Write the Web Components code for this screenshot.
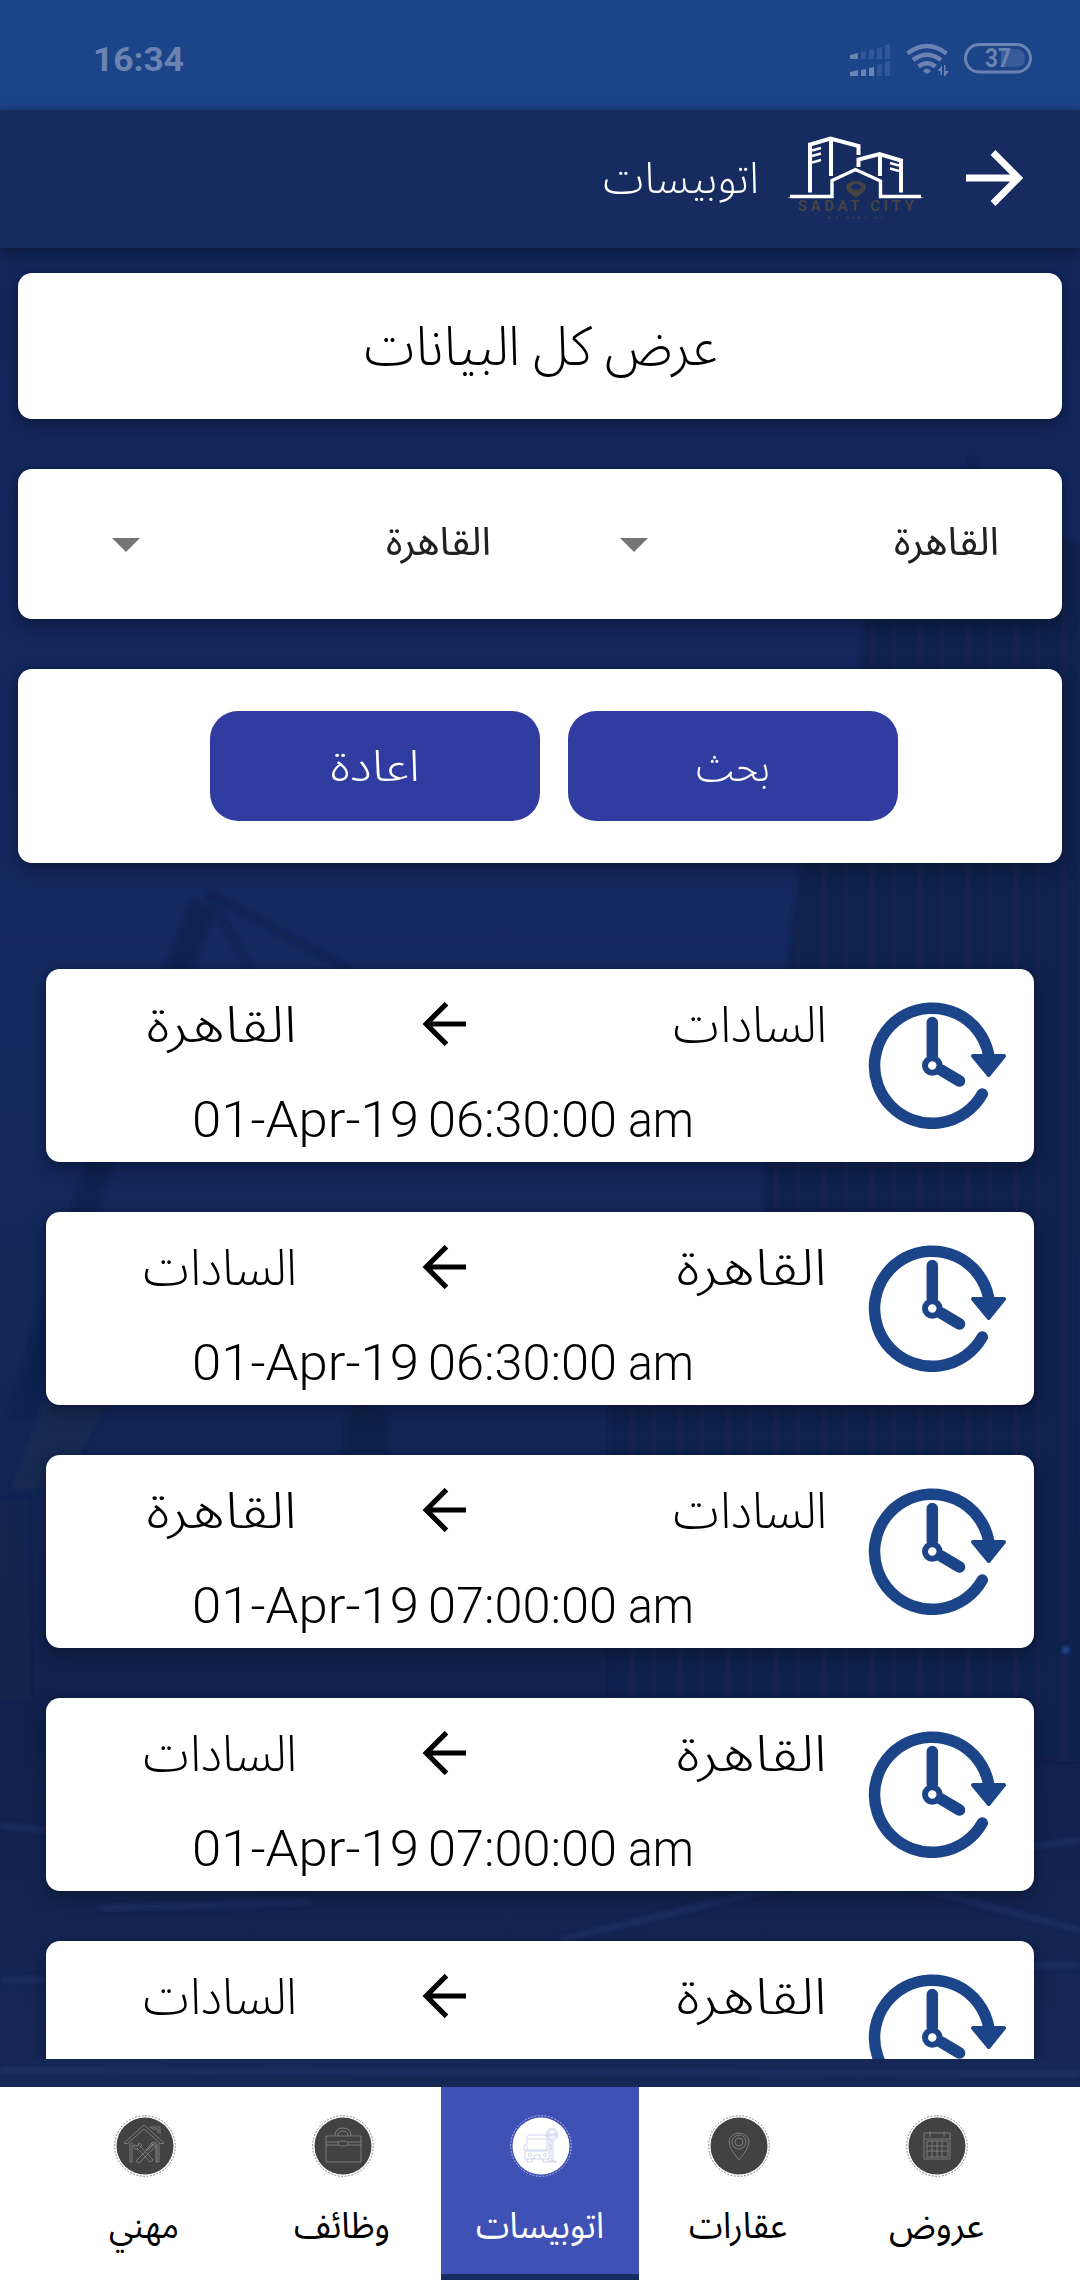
<!DOCTYPE html>
<html lang="ar"><head><meta charset="utf-8"><title>اتوبيسات</title>
<style>html,body{margin:0;padding:0;width:1080px;height:2280px;overflow:hidden;background:#12275b}</style></head>
<body><bus-app></bus-app>
<script>
const define=(name,build)=>customElements.define(name,class extends HTMLElement{
  connectedCallback(){if(!this.shadowRoot)this.attachShadow({mode:'open'}).innerHTML=build(this)}});
const attr=(e,n,d='')=>e.getAttribute(n)??d;

/* One line of text fitted to a width; "base" is the baseline inside the box. */
define('line-text',e=>{const w=+attr(e,'w'),h=attr(e,'h',40),b=attr(e,'base',32),s=attr(e,'size',40),bleed=+attr(e,'bleed',2);
return `<style>:host{display:block;flex:none;width:${w}px;height:${h}px}svg{display:block;overflow:visible;direction:ltr}
text{font:${attr(e,'weight','300')} ${s}px ${attr(e,'font',"Roboto,'Noto Sans Arabic','DejaVu Sans',sans-serif")};fill:currentColor}</style>
<svg width="${w}" height="${h}"><text x="${-bleed}" y="${b}" textLength="${w+2*bleed}" lengthAdjust="spacingAndGlyphs">${attr(e,'text')}</text></svg>`});

define('status-bar',()=>`<style>:host{display:flex;height:110px;background:#1c4488;color:#6a83b1;align-items:flex-start;padding:0 48px 0 95px;box-sizing:border-box}
line-text{margin-top:40px}.g{flex:1}svg{display:block;margin-top:42px}</style>
<line-text text="16:34" w="87" h="40" base="31" size="34" weight="700"></line-text><div class="g"></div>
<svg width="182" height="34" viewBox="850 42 182 34"><g fill="currentColor">
<path d="M850 55l8-2v6h-8zM850 72l8-2v6h-8zM861 70l5-1v7h-5zM869 68l5-1v9h-5z"/>
<path opacity=".3" d="M861 52l5-1v8h-5zM869 50l5-1v10h-5zM877 48l5-1v12h-5zM885 45l5-1v15h-5zM877 65l5-1v12h-5zM885 62l5-1v15h-5z"/></g>
<g fill="none" stroke="currentColor" stroke-width="4.6"><path d="M907.500 53.500Q927 38.500 946.500 53.500M913 60Q927 49.500 941 60M918.500 66.500Q927 60 935.500 66.500"/></g>
<path fill="currentColor" d="M923 71q4-5 8 0l-4 3zM937.500 71l4.500-6v10h-1.500v-4zM944 65h1.500v6h3.500l-5 6z"/>
<path fill="#3a5b99" d="M1001 49h14q10 0 10 9t-10 9h-14z"/>
<rect x="965.500" y="44.500" width="65" height="27.500" rx="13.750" fill="none" stroke="currentColor" stroke-width="3"/>
<text x="985" y="67" textLength="26" lengthAdjust="spacingAndGlyphs" font-family="Roboto" font-weight="700" font-size="25" fill="currentColor">37</text></svg>`);

define('city-logo',()=>`<style>:host{display:block;width:138px;height:84px}svg{display:block;overflow:visible}</style>
<svg width="138" height="84" viewBox="787 136 138 84"><g fill="none" stroke="#fff" stroke-width="4">
<path d="M810 192.500V144.500L830.500 138.500 858.500 146V155M831 139V176M858.500 167V159.500L879.500 154 901 160.500V192.500M880 155V176"/>
<path d="M790 196.500H832V180.500L855.500 169.500 880.500 181V196.500H921" stroke-width="3.400"/>
<path stroke-width="2.500" d="M812 150.500l9-2.500M812 156l9-2.500M812 162.500l9-2.500M899 165.500l-9-2.500M899 171l-9-2.500"/></g>
<path fill="#fff" d="M787 198h12v-3zM924 198h-12v-3z"/>
<path fill="#444" fill-rule="evenodd" d="M856 198q-10-7-10-11a10 6 0 0 1 20 0q0 4-10 11zM856 184a5 3 0 1 0 .1 0z"/>
<text x="798" y="211" textLength="116" font-family="Roboto" font-weight="700" font-size="15" fill="#444">SADAT CITY</text>
<path stroke="#3a3f52" stroke-width="1.300" stroke-dasharray="3 5 2 8 3 3 2 3" d="M828 217.500h56"/></svg>`);

define('top-bar',()=>`<style>:host{display:flex;height:138px;background:#162b60;box-shadow:0 4px 12px #0a1736;position:relative;color:#fff;justify-content:flex-end;box-sizing:border-box;padding-right:57px}
line-text{margin:41px 31px 0 0}city-logo{margin:26px 41px 0 0}svg{display:block;margin-top:40px}</style>
<line-text text="اتوبيسات" w="150" h="60" base="42" size="43" bleed="3" weight="330"></line-text><city-logo></city-logo>
<svg width="57" height="56" viewBox="0 0 57 56"><path d="M0 28H50M27 2.500L52.500 28 27 53.500" fill="none" stroke="#fff" stroke-width="6.800"/></svg>`);

define('white-card',()=>`<style>:host{display:flex;box-sizing:border-box;background:#fff;border-radius:14px;box-shadow:0 7px 16px rgba(8,16,40,.5),0 0 5px rgba(8,16,40,.3)}</style><slot></slot>`);
define('pick-list',()=>`<style>:host{display:flex;flex:none;width:508px;padding:13px 0 0 94px;box-sizing:border-box;color:#212121;align-items:flex-start;gap:248px}svg{display:block;margin-top:56px}line-text{margin-top:36px}</style>
<svg width="28" height="14"><path d="M0 0H28L14 14z" fill="#757575"/></svg><line-text text="القاهرة" w="101" h="50" base="37" size="39" weight="400"></line-text>`);
define('pill-button',e=>`<style>:host{display:flex;width:330px;height:110px;border-radius:28px;background:#303c9f;color:#fff;justify-content:center;box-sizing:border-box}line-text{margin-top:30px}</style>
<line-text text="${attr(e,'text')}" w="${attr(e,'w')}" h="50" base="40" size="43"></line-text>`);

define('clock-icon',()=>`<style>:host{display:block;width:138px;height:128px}svg{display:block}</style>
<svg width="138" height="128" viewBox="868 1001 138 128"><g fill="none" stroke="#1c4488" stroke-width="11.500" stroke-linecap="round">
<path d="M982.300 1094A57.600 57.600 0 1 1 988.500 1054"/><path d="M932.300 1055V1022.500M941 1070L959.500 1081"/><circle cx="932.300" cy="1065.500" r="7.300" stroke-width="6"/></g>
<path d="M973 1056H1004L988.700 1075z" fill="#1c4488" stroke="#1c4488" stroke-width="4" stroke-linejoin="round"/></svg>`);

/* Departure stamp: date, time and meridiem sit on fixed columns. */
define('trip-stamp',e=>{const [d,t,m]=attr(e,'value').split(' ');return `<style>:host{display:flex;height:60px;align-items:flex-start}.t{margin-left:13px}.m{margin-left:15px}</style>
<line-text text="${d}" w="223" h="60" base="46" size="49.5"></line-text><line-text class="t" text="${t}" w="185" h="60" base="46" size="49.5"></line-text><line-text class="m" text="${m}" w="62" h="60" base="46" size="49.5"></line-text>`});

const widths={'السادات':148,'القاهرة':145},weights={'السادات':350,'القاهرة':300};
define('trip-card',e=>{const f=attr(e,'from'),t=attr(e,'to'),d=attr(e,'date');
const place=n=>`<line-text text="${n}" w="${widths[n]}" weight="${weights[n]}" h="60" base="43" size="50" bleed="3"></line-text>`;
return `<style>:host{display:block;flex:none;height:193px}
white-card{height:193px;padding:0 28px 0 97px;justify-content:space-between}
.info{width:681px;display:flex;flex-direction:column}.route{display:flex;height:122px}
.end{width:151px;display:flex;justify-content:flex-end;padding-top:30px}
.route svg{display:block;margin:33px 0 0 128px}.from{flex:1;display:flex;justify-content:flex-end;padding-top:30px}
trip-stamp{margin-left:51px}clock-icon{margin-top:32px}</style>
<white-card><div class="info"><div class="route"><div class="end">${place(t)}</div>
<svg width="44" height="44"><path d="M44 22H4M24.500 1.700L4.200 22 24.500 42.300" stroke="#000" stroke-width="5.200" fill="none"/></svg>
<div class="from">${place(f)}</div></div>
${d?`<trip-stamp value="${d}"></trip-stamp>`:''}</div><clock-icon></clock-icon></white-card>`});

const glyphs={
house:'<path d="M-21-3L-1-21 19-3M-18-2L-1-17 16-2M-21-3l3 1M19-3l-3 1M-15-3V16H-13V-4M11-4V16H14V-3M12-2V16M5-19H15V-12M13-17V-13M5-19l3 2h5M-9 15L8-2M-6 17L11 0M6-3l5 4M-9 15l3 2M-8 2L5 16 8 14-5 0M-11-1q-1 5 4 4M-6-3q5 2 1 4M-11-1l4 1 1-3M1 4L8-4l2 1-7 8"/>',
bag:'<path d="M-17-10H18V16H-17zM-17-4H-4M-17-1H-4M4-4H18M4-1H18M-8-10q0-8 8-8t8 8M-5-10q0-5 5-5t5 5"/><ellipse cy="-2.500" rx="5" ry="2.500"/>',
pin:'<path d="M0 14Q-10 2-10-4A10 9 0 0 1 10-4Q10 2 0 14z"/><circle cy="-4" r="7"/><circle cy="-4" r="4"/>',
calendar:'<path d="M-13-13H13V13H-13zM-13-7H13M-10-5H11V11H-10zM-10 0H11M-10 5H11M-5-5V11M0-5V11M5-5V11M-7-15V-9M7-15V-9"/>',
bus:'<path d="M-15-7q0-4 4-4H4q4 0 4 4V13H-16V5M-14-7H6V4H-14zM-15-1h-2v5h2M8-1h2v4H8M-16 5H8M-14 13v3h5v-3M2 13v3h5v-3M-7 9v4M-1 9v4M-7 9h6M10-5V15M12-5V15M8 16h7V15H8z"/><circle cx="-11" cy="9" r="1.500"/><circle cx="4" cy="9" r="1.500"/><circle cx="11" cy="-11.500" r="6"/><circle cx="11" cy="-11.500" r="4.500"/><path d="M7-10v-3h2v3zM10-13v3h2v-3M15-13h-2v1.500h2v1.500h-2"/>'};
define('nav-tab',e=>{const on=e.hasAttribute('active');return `<style>:host{display:flex;flex-direction:column;align-items:center;width:198px;height:193px;box-sizing:border-box;color:${on?'#fff':'#000'};background:${on?'#3f51b5':'#fff'};${on?'border-bottom:6px solid #162b60;':''}}
svg{display:block;margin:27px -2px 0 0;flex:none}line-text{margin-top:24px}</style>
<svg width="64" height="64" viewBox="-32 -32 64 64"><circle r="28.500" fill="${on?'#fff':'#424242'}"/><circle r="30.300" fill="none" stroke="${on?'#c0c6e8':'#777'}" stroke-width="1" stroke-dasharray="1.700 1.700"/>
<g fill="none" stroke="${on?'#c5cae9':'#8a8a8a'}" stroke-width=".8">${glyphs[attr(e,'icon')]}</g></svg>
<line-text text="${attr(e,'text')}" w="${attr(e,'w')}" h="50" base="36" size="36.500" weight="400" bleed="1"></line-text>`});

/* Dimmed city-at-night backdrop. */
define('city-backdrop',()=>`<style>:host{display:block;position:absolute;inset:0}svg{display:block}</style>
<svg width="1080" height="2280"><defs><linearGradient id="s" x1="0" y1="0" x2="0" y2="1"><stop offset="0" stop-color="#12265a"/><stop offset=".45" stop-color="#14295f"/><stop offset=".64" stop-color="#122655"/><stop offset=".76" stop-color="#10214b"/><stop offset=".82" stop-color="#12244f"/><stop offset="1" stop-color="#192c5c"/></linearGradient>
<pattern id="p" width="48" height="26" patternUnits="userSpaceOnUse"><path d="M8 0V26M30 0V26" stroke="#15274f" stroke-width="3"/><path d="M0 18l48-7" stroke="#142550" stroke-width="2"/></pattern>
<filter id="b"><feGaussianBlur stdDeviation="2"/></filter></defs><rect width="1080" height="2280" fill="url(#s)"/>
<g filter="url(#b)"><path fill="#11224d" d="M855 720L865 620 880 580 960 540 972 448 990 540H1065L1080 545V1760H610V1400L765 1260V1162L800 863z"/>
<path fill="url(#p)" opacity=".7" d="M855 720L865 620 880 580 960 540H1080V1760H610V1400L765 1260V1162L800 863z"/>
<path fill="none" stroke="#11224f" stroke-width="24" d="M204 905L100 1162 20 1420"/><path fill="none" stroke="#11224f" stroke-width="4" d="M208 893L350 970M208 893L250 970"/>
<path fill="#192951" d="M45 1400H110L60 1490H10z"/><path fill="#10204b" d="M345 1460V1420L365 1400 388 1420V1460z"/>
<path fill="#14244c" d="M0 1500H30V1700H0z" opacity=".6"/>
<g fill="none" stroke="#20366f" stroke-width="6" opacity=".5"><path d="M0 1826Q60 1830 100 1840M100 1908L310 1902M0 1980L1080 1965M560 1940L850 1870 1080 1840M850 1870L1080 1930M0 2070L1080 2074"/></g></g><circle cx="1066" cy="1650" r="4" fill="#1d4a93" filter="url(#b)"/></svg>`);

define('bus-app',()=>{const S='السادات',C='القاهرة',trip=(f,t,h)=>`<trip-card from="${f}" to="${t}" date="${h?`01-Apr-19 ${h}:00 am`:''}"></trip-card>`;
return `<style>:host{display:flex;flex-direction:column;position:relative;width:1080px;height:2280px;overflow:hidden}
.filters{display:flex;flex-direction:column;gap:50px;padding:25px 18px 0;position:relative}
.all{height:146px;justify-content:center;padding-top:49px}.sel{height:150px}.act{height:194px;gap:28px;padding:42px 0 0 192px}
.list{height:1102px;flex:none;box-sizing:border-box;margin-top:94px;overflow:hidden;position:relative;padding:12px 46px 0;display:flex;flex-direction:column;gap:50px}
nav{display:flex;height:193px;background:#fff;margin-top:28px;padding-left:45px;position:relative}top-bar{z-index:1}status-bar{position:relative}</style>
<city-backdrop></city-backdrop><status-bar></status-bar><top-bar></top-bar>
<div class="filters"><white-card class="all"><line-text text="عرض كل البيانات" w="347" h="60" base="43" size="55" bleed="3"></line-text></white-card>
<white-card class="sel"><pick-list></pick-list><pick-list></pick-list></white-card>
<white-card class="act"><pill-button text="اعادة" w="86"></pill-button><pill-button text="بحث" w="70"></pill-button></white-card></div>
<div class="list">${trip(S,C,'06:30')}${trip(C,S,'06:30')}${trip(S,C,'07:00')}${trip(C,S,'07:00')}${trip(C,S,'')}</div>
<nav><nav-tab icon="house" text="مهني" w="68"></nav-tab><nav-tab icon="bag" text="وظائف" w="94"></nav-tab><nav-tab icon="bus" text="اتوبيسات" w="126" active></nav-tab><nav-tab icon="pin" text="عقارات" w="96"></nav-tab><nav-tab icon="calendar" text="عروض" w="93"></nav-tab></nav>`});
</script></body></html>
